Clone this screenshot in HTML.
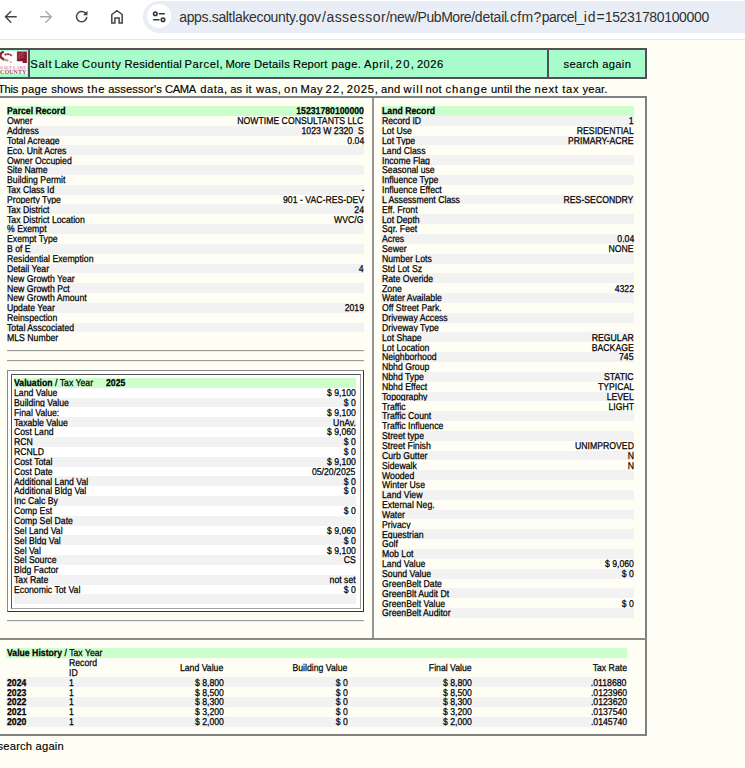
<!DOCTYPE html>
<html><head><meta charset="utf-8"><style>
*{margin:0;padding:0;box-sizing:border-box}
html,body{width:745px;height:768px;overflow:hidden}
body{position:relative;background:#fefef4;font-family:"Liberation Sans",sans-serif;color:#000}
.a{position:absolute}
.r{position:absolute;font-size:9.9px;line-height:9.845px;white-space:nowrap;-webkit-text-stroke:0.25px #000;text-rendering:geometricPrecision}
.r .l{position:absolute;left:0.2px;top:1.3px;transform:scaleX(0.88);transform-origin:0 0}
.r .v{position:absolute;right:0.2px;top:1.3px;transform:scaleX(0.88);transform-origin:100% 0}
.b{font-weight:bold}
.w{position:absolute;font-size:11.2px;letter-spacing:0.3px;line-height:12px;white-space:nowrap;-webkit-text-stroke:0.15px #000}
.u{position:absolute;top:8.6px;font-size:14px;line-height:17px;color:#303030;white-space:pre}
.hr{position:absolute;height:2px;border-top:1px solid #9b9b9b;border-bottom:1px solid #ededed}
</style></head><body>
<div class="a" style="left:0;top:0;width:745px;height:39px;background:#fff"></div>
<div class="a" style="left:0;top:38.8px;width:745px;height:1.5px;background:#e6e6e6"></div>
<div class="a" style="left:143px;top:1px;width:640px;height:31.5px;border-radius:16px;background:#e9eef6"></div>
<div class="a" style="left:147px;top:4.4px;width:23.8px;height:23.8px;border-radius:50%;background:#fff"></div>
<svg class="a" style="left:0;top:0" width="140" height="36" viewBox="0 0 140 36">
 <g fill="none" stroke="#444" stroke-width="1.4" stroke-linecap="round" stroke-linejoin="round">
  <path d="M16.2 16.8H5.6M10.8 11.4L5.4 16.8L10.8 22.2"/>
 </g>
 <g fill="none" stroke="#a7a7a7" stroke-width="1.4" stroke-linecap="round" stroke-linejoin="round">
  <path d="M40.5 16.8H51.1M45.9 11.4L51.3 16.8L45.9 22.2"/>
 </g>
 <g fill="none" stroke="#444" stroke-width="1.5" stroke-linecap="round" stroke-linejoin="round">
  <path d="M86.7 17.5A5.15 5.15 0 1 1 85.2 12.9"/>
 </g>
 <g fill="#444" stroke="none">
  <path d="M87.5 10.8V15.3H83Z"/>
 </g>
 <g fill="none" stroke="#444" stroke-width="1.5" stroke-linejoin="miter">
  <path d="M111.8 23V14.5L117 10.6L122.2 14.5V23H119.1V17.9H114.9V23Z"/>
 </g>
</svg>
<svg class="a" style="left:150px;top:8px" width="18" height="17" viewBox="0 0 18 17">
 <g fill="none" stroke="#333" stroke-width="1.6" stroke-linecap="round">
  <circle cx="5.3" cy="5.7" r="1.75"/><path d="M9.4 5.7H14.3"/>
  <circle cx="13" cy="11.7" r="1.75"/><path d="M3.8 11.7H8.9"/>
 </g>
</svg>
<span class="u" style="left:179.20px;letter-spacing:-0.34px">apps.saltlakecounty</span><span class="u" style="left:295.00px;letter-spacing:-0.117px">.gov</span><span class="u" style="left:322.10px;letter-spacing:0.442px">/assessor</span><span class="u" style="left:386.00px;letter-spacing:-0.345px">/new</span><span class="u" style="left:414.20px;letter-spacing:-0.463px">/PubMore</span><span class="u" style="left:471.20px;letter-spacing:-0.237px">/detail</span><span class="u" style="left:505.80px;letter-spacing:0.293px">.cfm?</span><span class="u" style="left:541.80px;letter-spacing:-0.56px">parcel_</span><span class="u" style="left:583.80px;letter-spacing:0.841px">id=</span><span class="u" style="left:604.70px;letter-spacing:-0.344px">15231780100000</span>

<!-- header table -->
<div class="a" style="left:-10px;top:48.1px;width:656.9px;height:30.6px;background:#554e58;box-shadow:0 0 0 1px #fff"></div>
<div class="a" style="left:0;top:50.1px;width:28.4px;height:26.5px;background:#a7fdca"></div>
<div class="a" style="left:30.1px;top:50.1px;width:517.4px;height:26.5px;background:#a7fdca"></div>
<div class="a" style="left:549.2px;top:50.1px;width:95.6px;height:26.5px;background:#a7fdca"></div>
<svg class="a" style="left:0;top:51.1px" width="27" height="23" viewBox="0 0 27 23">
 <rect width="27" height="23" fill="#fff"/>
 <path d="M3.8 0.6C2 1.2 0.6 2.5 0.3 4C0.4 6 2 7.8 4.2 8.6" stroke="#94243a" stroke-width="2.3" fill="none"/>
 <path d="M4.2 8.6C5.6 9.3 7.2 9.6 8.4 9.2" stroke="#c49a78" stroke-width="2.2" fill="none"/>
 <path d="M4.6 3.8C7 2.6 10.4 3 12 4.8" stroke="#94283c" stroke-width="1.9" stroke-dasharray="2 0.4" fill="none"/>
 <circle cx="10.8" cy="11.2" r="0.9" fill="#d0a888"/>
 <path d="M16.9 0.4H26.9V12.1H22.6V10.2H16.9Z" fill="#8c1830"/>
 <path d="M17.5 3.5L24 1.5M17.5 5.5L24.5 3.2M17.5 7.5L24 5.4" stroke="#c8866a" stroke-width="0.7" stroke-dasharray="1.2 0.5"/>
 <text x="0" y="17.7" font-family="Liberation Serif" font-weight="bold" font-size="5" fill="#cf90a2" textLength="26.5" lengthAdjust="spacingAndGlyphs">SALT LAKE</text>
 <rect x="0" y="18.2" width="26.5" height="0.5" fill="#e8d0b8"/>
 <text x="0" y="22.8" font-family="Liberation Serif" font-weight="bold" font-size="5.8" fill="#a34a5e" textLength="26.5" lengthAdjust="spacingAndGlyphs">COUNTY</text>
</svg>
<span class="w" id="h0" style="left:30.30px;top:57.9px;letter-spacing:0.673px">Salt</span><span class="w" id="h1" style="left:54.60px;top:57.9px;letter-spacing:-0.073px">Lake</span><span class="w" id="h2" style="left:81.90px;top:57.9px;letter-spacing:0.716px">County</span><span class="w" id="h3" style="left:124.60px;top:57.9px;letter-spacing:0.188px">Residential</span><span class="w" id="h4" style="left:184.60px;top:57.9px;letter-spacing:0.540px">Parcel,</span><span class="w" id="h5" style="left:225.60px;top:57.9px;letter-spacing:-0.233px">More</span><span class="w" id="h6" style="left:253.90px;top:57.9px;letter-spacing:0.273px">Details</span><span class="w" id="h7" style="left:292.90px;top:57.9px;letter-spacing:0.172px">Report</span><span class="w" id="h8" style="left:331.50px;top:57.9px;letter-spacing:0.340px">page.</span><span class="w" id="h9" style="left:364.10px;top:57.9px;letter-spacing:0.684px">April,</span><span class="w" id="h10" style="left:395.60px;top:57.9px;letter-spacing:1.340px">20,</span><span class="w" id="h11" style="left:416.90px;top:57.9px;letter-spacing:0.460px">2026</span>
<div class="a" style="left:563.5px;top:57.9px;font-size:11.2px;letter-spacing:0.3px;-webkit-text-stroke:0.15px #000;line-height:12px;white-space:nowrap">search again</div>

<span class="w" id="t0" style="left:-2.00px;top:83px;letter-spacing:-0.300px">This</span><span class="w" id="t1" style="left:21.50px;top:83px;letter-spacing:0.300px">page</span><span class="w" id="t2" style="left:51.20px;top:83px;letter-spacing:0.140px">shows</span><span class="w" id="t3" style="left:87.20px;top:83px;letter-spacing:0.860px">the</span><span class="w" id="t4" style="left:108.20px;top:83px;letter-spacing:0.123px">assessor's</span><span class="w" id="t5" style="left:164.90px;top:83px;letter-spacing:-0.340px">CAMA</span><span class="w" id="t6" style="left:200.20px;top:83px;letter-spacing:0.540px">data,</span><span class="w" id="t7" style="left:230.20px;top:83px;letter-spacing:-0.020px">as</span><span class="w" id="t8" style="left:245.80px;top:83px;letter-spacing:0.300px">it</span><span class="w" id="t9" style="left:256.10px;top:83px;letter-spacing:0.620px">was,</span><span class="w" id="t10" style="left:283.90px;top:83px;letter-spacing:1.100px">on</span><span class="w" id="t11" style="left:300.60px;top:83px;letter-spacing:0.460px">May</span><span class="w" id="t12" style="left:325.60px;top:83px;letter-spacing:1.260px">22,</span><span class="w" id="t13" style="left:346.80px;top:83px;letter-spacing:0.780px">2025,</span><span class="w" id="t14" style="left:380.90px;top:83px;letter-spacing:0.300px">and</span><span class="w" id="t15" style="left:403.40px;top:83px;letter-spacing:1.207px">will</span><span class="w" id="t16" style="left:425.60px;top:83px;letter-spacing:0.220px">not</span><span class="w" id="t17" style="left:445.50px;top:83px;letter-spacing:0.940px">change</span><span class="w" id="t18" style="left:490.90px;top:83px;letter-spacing:0.180px">until</span><span class="w" id="t19" style="left:515.20px;top:83px;letter-spacing:0.140px">the</span><span class="w" id="t20" style="left:534.60px;top:83px;letter-spacing:0.727px">next</span><span class="w" id="t21" style="left:562.20px;top:83px;letter-spacing:0.700px">tax</span><span class="w" id="t22" style="left:582.50px;top:83px;letter-spacing:0.180px">year.</span>

<!-- main table borders -->
<div class="a" style="left:-10px;top:96.4px;width:657px;height:1.7px;background:#828282"></div>
<div class="a" style="left:-10px;top:98.1px;width:654.9px;height:1px;background:#fff;opacity:.7"></div>
<div class="a" style="left:643.9px;top:98.1px;width:1px;height:540px;background:#fff;opacity:.7"></div>
<div class="a" style="left:644.9px;top:96.4px;width:1.8px;height:639.7px;background:#808080"></div>
<div class="a" style="left:372.3px;top:98px;width:1.7px;height:540px;background:#979797"></div>
<div class="a" style="left:-10px;top:637.9px;width:657px;height:1.8px;background:#8a8a8a"></div>
<div class="a" style="left:-10px;top:734.1px;width:657px;height:2px;background:#808080"></div>

<div class="r" style="left:6.7px;top:106.000px;width:357.30px;height:9.845px;background:#ccffcc"><span class="l b">Parcel Record</span><span class="v b">15231780100000</span></div>
<div class="r" style="left:6.7px;top:115.845px;width:357.30px;height:9.845px;background:#fefef4"><span class="l">Owner</span><span class="v">NOWTIME CONSULTANTS LLC</span></div>
<div class="r" style="left:6.7px;top:125.690px;width:357.30px;height:9.845px;background:#f2f2f2"><span class="l">Address</span><span class="v">1023 W 2320&nbsp; S</span></div>
<div class="r" style="left:6.7px;top:135.535px;width:357.30px;height:9.845px;background:#fefef4"><span class="l">Total Acreage</span><span class="v">0.04</span></div>
<div class="r" style="left:6.7px;top:145.380px;width:357.30px;height:9.845px;background:#f2f2f2"><span class="l">Eco. Unit Acres</span><span class="v"></span></div>
<div class="r" style="left:6.7px;top:155.225px;width:357.30px;height:9.845px;background:#fefef4"><span class="l">Owner Occupied</span><span class="v"></span></div>
<div class="r" style="left:6.7px;top:165.070px;width:357.30px;height:9.845px;background:#f2f2f2"><span class="l">Site Name</span><span class="v"></span></div>
<div class="r" style="left:6.7px;top:174.915px;width:357.30px;height:9.845px;background:#fefef4"><span class="l">Building Permit</span><span class="v"></span></div>
<div class="r" style="left:6.7px;top:184.760px;width:357.30px;height:9.845px;background:#f2f2f2"><span class="l">Tax Class Id</span><span class="v">-</span></div>
<div class="r" style="left:6.7px;top:194.605px;width:357.30px;height:9.845px;background:#fefef4"><span class="l">Property Type</span><span class="v">901 - VAC-RES-DEV</span></div>
<div class="r" style="left:6.7px;top:204.450px;width:357.30px;height:9.845px;background:#f2f2f2"><span class="l">Tax District</span><span class="v">24</span></div>
<div class="r" style="left:6.7px;top:214.295px;width:357.30px;height:9.845px;background:#fefef4"><span class="l">Tax District Location</span><span class="v">WVC/G</span></div>
<div class="r" style="left:6.7px;top:224.140px;width:357.30px;height:9.845px;background:#f2f2f2"><span class="l">% Exempt</span><span class="v"></span></div>
<div class="r" style="left:6.7px;top:233.985px;width:357.30px;height:9.845px;background:#fefef4"><span class="l">Exempt Type</span><span class="v"></span></div>
<div class="r" style="left:6.7px;top:243.830px;width:357.30px;height:9.845px;background:#f2f2f2"><span class="l">B of E</span><span class="v"></span></div>
<div class="r" style="left:6.7px;top:253.675px;width:357.30px;height:9.845px;background:#fefef4"><span class="l">Residential Exemption</span><span class="v"></span></div>
<div class="r" style="left:6.7px;top:263.520px;width:357.30px;height:9.845px;background:#f2f2f2"><span class="l">Detail Year</span><span class="v">4</span></div>
<div class="r" style="left:6.7px;top:273.365px;width:357.30px;height:9.845px;background:#fefef4"><span class="l">New Growth Year</span><span class="v"></span></div>
<div class="r" style="left:6.7px;top:283.210px;width:357.30px;height:9.845px;background:#f2f2f2"><span class="l">New Growth Pct</span><span class="v"></span></div>
<div class="r" style="left:6.7px;top:293.055px;width:357.30px;height:9.845px;background:#fefef4"><span class="l">New Growth Amount</span><span class="v"></span></div>
<div class="r" style="left:6.7px;top:302.900px;width:357.30px;height:9.845px;background:#f2f2f2"><span class="l">Update Year</span><span class="v">2019</span></div>
<div class="r" style="left:6.7px;top:312.745px;width:357.30px;height:9.845px;background:#fefef4"><span class="l">Reinspection</span><span class="v"></span></div>
<div class="r" style="left:6.7px;top:322.590px;width:357.30px;height:9.845px;background:#f2f2f2"><span class="l">Total Asscociated</span><span class="v"></span></div>
<div class="r" style="left:6.7px;top:332.435px;width:357.30px;height:9.845px;background:#fefef4"><span class="l">MLS Number</span><span class="v"></span></div>
<div class="hr" style="left:6.8px;top:350.3px;width:356.9px"></div>
<div class="hr" style="left:6.8px;top:359.9px;width:356.9px"></div>

<!-- valuation box -->
<div class="a" style="left:7.1px;top:370.1px;width:357.2px;height:241.7px;background:#fff;border-style:solid;border-width:1.2px;border-color:#8a8a8a #333 #333 #8a8a8a"></div>
<div class="a" style="left:10.9px;top:373.9px;width:349.8px;height:234.7px;border-style:solid;border-width:1.3px;border-color:#555 #a0a0a0 #a0a0a0 #555"></div>
<div class="r" style="left:14.2px;top:377.900px;width:341.90px;height:9.845px;background:#ccffcc"><span class="l"><b>Valuation</b> / Tax Year</span><span class="l b" style="left:91.5px">2025</span></div>
<div class="r" style="left:14.2px;top:387.745px;width:341.90px;height:9.845px;background:#ffffff"><span class="l">Land Value</span><span class="v">$ 9,100</span></div>
<div class="r" style="left:14.2px;top:397.590px;width:341.90px;height:9.845px;background:#f2f2f2"><span class="l">Building Value</span><span class="v">$ 0</span></div>
<div class="r" style="left:14.2px;top:407.435px;width:341.90px;height:9.845px;background:#ffffff"><span class="l">Final Value:</span><span class="v">$ 9,100</span></div>
<div class="r" style="left:14.2px;top:417.280px;width:341.90px;height:9.845px;background:#f2f2f2"><span class="l">Taxable Value</span><span class="v">UnAv.</span></div>
<div class="r" style="left:14.2px;top:427.125px;width:341.90px;height:9.845px;background:#ffffff"><span class="l">Cost Land</span><span class="v">$ 9,060</span></div>
<div class="r" style="left:14.2px;top:436.970px;width:341.90px;height:9.845px;background:#f2f2f2"><span class="l">RCN</span><span class="v">$ 0</span></div>
<div class="r" style="left:14.2px;top:446.815px;width:341.90px;height:9.845px;background:#ffffff"><span class="l">RCNLD</span><span class="v">$ 0</span></div>
<div class="r" style="left:14.2px;top:456.660px;width:341.90px;height:9.845px;background:#f2f2f2"><span class="l">Cost Total</span><span class="v">$ 9,100</span></div>
<div class="r" style="left:14.2px;top:466.505px;width:341.90px;height:9.845px;background:#ffffff"><span class="l">Cost Date</span><span class="v">05/20/2025</span></div>
<div class="r" style="left:14.2px;top:476.350px;width:341.90px;height:9.845px;background:#f2f2f2"><span class="l">Additional Land Val</span><span class="v">$ 0</span></div>
<div class="r" style="left:14.2px;top:486.195px;width:341.90px;height:9.845px;background:#ffffff"><span class="l">Additional Bldg Val</span><span class="v">$ 0</span></div>
<div class="r" style="left:14.2px;top:496.040px;width:341.90px;height:9.845px;background:#f2f2f2"><span class="l">Inc Calc By</span><span class="v"></span></div>
<div class="r" style="left:14.2px;top:505.885px;width:341.90px;height:9.845px;background:#ffffff"><span class="l">Comp Est</span><span class="v">$ 0</span></div>
<div class="r" style="left:14.2px;top:515.730px;width:341.90px;height:9.845px;background:#f2f2f2"><span class="l">Comp Sel Date</span><span class="v"></span></div>
<div class="r" style="left:14.2px;top:525.575px;width:341.90px;height:9.845px;background:#ffffff"><span class="l">Sel Land Val</span><span class="v">$ 9,060</span></div>
<div class="r" style="left:14.2px;top:535.420px;width:341.90px;height:9.845px;background:#f2f2f2"><span class="l">Sel Bldg Val</span><span class="v">$ 0</span></div>
<div class="r" style="left:14.2px;top:545.265px;width:341.90px;height:9.845px;background:#ffffff"><span class="l">Sel Val</span><span class="v">$ 9,100</span></div>
<div class="r" style="left:14.2px;top:555.110px;width:341.90px;height:9.845px;background:#f2f2f2"><span class="l">Sel Source</span><span class="v">CS</span></div>
<div class="r" style="left:14.2px;top:564.955px;width:341.90px;height:9.845px;background:#ffffff"><span class="l">Bldg Factor</span><span class="v"></span></div>
<div class="r" style="left:14.2px;top:574.800px;width:341.90px;height:9.845px;background:#f2f2f2"><span class="l">Tax Rate</span><span class="v">not set</span></div>
<div class="r" style="left:14.2px;top:584.645px;width:341.90px;height:9.845px;background:#ffffff"><span class="l">Economic Tot Val</span><span class="v">$ 0</span></div>
<div class="r" style="left:14.2px;top:594.490px;width:341.90px;height:9.845px;background:#f2f2f2"><span class="l"></span><span class="v"></span></div>
<div class="hr" style="left:6.8px;top:620px;width:356.9px"></div>

<div class="r" style="left:381.4px;top:106.000px;width:252.60px;height:9.845px;background:#ccffcc"><span class="l b">Land Record</span></div>
<div class="r" style="left:381.4px;top:115.845px;width:252.60px;height:9.845px;background:#f2f2f2"><span class="l">Record ID</span><span class="v">1</span></div>
<div class="r" style="left:381.4px;top:125.690px;width:252.60px;height:9.845px;background:#fefef4"><span class="l">Lot Use</span><span class="v">RESIDENTIAL</span></div>
<div class="r" style="left:381.4px;top:135.535px;width:252.60px;height:9.845px;background:#f2f2f2"><span class="l">Lot Type</span><span class="v">PRIMARY-ACRE</span></div>
<div class="r" style="left:381.4px;top:145.380px;width:252.60px;height:9.845px;background:#fefef4"><span class="l">Land Class</span><span class="v"></span></div>
<div class="r" style="left:381.4px;top:155.225px;width:252.60px;height:9.845px;background:#f2f2f2"><span class="l">Income Flag</span><span class="v"></span></div>
<div class="r" style="left:381.4px;top:165.070px;width:252.60px;height:9.845px;background:#fefef4"><span class="l">Seasonal use</span><span class="v"></span></div>
<div class="r" style="left:381.4px;top:174.915px;width:252.60px;height:9.845px;background:#f2f2f2"><span class="l">Influence Type</span><span class="v"></span></div>
<div class="r" style="left:381.4px;top:184.760px;width:252.60px;height:9.845px;background:#fefef4"><span class="l">Influence Effect</span><span class="v"></span></div>
<div class="r" style="left:381.4px;top:194.605px;width:252.60px;height:9.845px;background:#f2f2f2"><span class="l">L Assessment Class</span><span class="v">RES-SECONDRY</span></div>
<div class="r" style="left:381.4px;top:204.450px;width:252.60px;height:9.845px;background:#fefef4"><span class="l">Eff. Front</span><span class="v"></span></div>
<div class="r" style="left:381.4px;top:214.295px;width:252.60px;height:9.845px;background:#f2f2f2"><span class="l">Lot Depth</span><span class="v"></span></div>
<div class="r" style="left:381.4px;top:224.140px;width:252.60px;height:9.845px;background:#fefef4"><span class="l">Sqr. Feet</span><span class="v"></span></div>
<div class="r" style="left:381.4px;top:233.985px;width:252.60px;height:9.845px;background:#f2f2f2"><span class="l">Acres</span><span class="v">0.04</span></div>
<div class="r" style="left:381.4px;top:243.830px;width:252.60px;height:9.845px;background:#fefef4"><span class="l">Sewer</span><span class="v">NONE</span></div>
<div class="r" style="left:381.4px;top:253.675px;width:252.60px;height:9.845px;background:#f2f2f2"><span class="l">Number Lots</span><span class="v"></span></div>
<div class="r" style="left:381.4px;top:263.520px;width:252.60px;height:9.845px;background:#fefef4"><span class="l">Std Lot Sz</span><span class="v"></span></div>
<div class="r" style="left:381.4px;top:273.365px;width:252.60px;height:9.845px;background:#f2f2f2"><span class="l">Rate Overide</span><span class="v"></span></div>
<div class="r" style="left:381.4px;top:283.210px;width:252.60px;height:9.845px;background:#fefef4"><span class="l">Zone</span><span class="v">4322</span></div>
<div class="r" style="left:381.4px;top:293.055px;width:252.60px;height:9.845px;background:#f2f2f2"><span class="l">Water Available</span><span class="v"></span></div>
<div class="r" style="left:381.4px;top:302.900px;width:252.60px;height:9.845px;background:#fefef4"><span class="l">Off Street Park.</span><span class="v"></span></div>
<div class="r" style="left:381.4px;top:312.745px;width:252.60px;height:9.845px;background:#f2f2f2"><span class="l">Driveway Access</span><span class="v"></span></div>
<div class="r" style="left:381.4px;top:322.590px;width:252.60px;height:9.845px;background:#fefef4"><span class="l">Driveway Type</span><span class="v"></span></div>
<div class="r" style="left:381.4px;top:332.435px;width:252.60px;height:9.845px;background:#f2f2f2"><span class="l">Lot Shape</span><span class="v">REGULAR</span></div>
<div class="r" style="left:381.4px;top:342.280px;width:252.60px;height:9.845px;background:#fefef4"><span class="l">Lot Location</span><span class="v">BACKAGE</span></div>
<div class="r" style="left:381.4px;top:352.125px;width:252.60px;height:9.845px;background:#f2f2f2"><span class="l">Neighborhood</span><span class="v">745</span></div>
<div class="r" style="left:381.4px;top:361.970px;width:252.60px;height:9.845px;background:#fefef4"><span class="l">Nbhd Group</span><span class="v"></span></div>
<div class="r" style="left:381.4px;top:371.815px;width:252.60px;height:9.845px;background:#f2f2f2"><span class="l">Nbhd Type</span><span class="v">STATIC</span></div>
<div class="r" style="left:381.4px;top:381.660px;width:252.60px;height:9.845px;background:#fefef4"><span class="l">Nbhd Effect</span><span class="v">TYPICAL</span></div>
<div class="r" style="left:381.4px;top:391.505px;width:252.60px;height:9.845px;background:#f2f2f2"><span class="l">Topography</span><span class="v">LEVEL</span></div>
<div class="r" style="left:381.4px;top:401.350px;width:252.60px;height:9.845px;background:#fefef4"><span class="l">Traffic</span><span class="v">LIGHT</span></div>
<div class="r" style="left:381.4px;top:411.195px;width:252.60px;height:9.845px;background:#f2f2f2"><span class="l">Traffic Count</span><span class="v"></span></div>
<div class="r" style="left:381.4px;top:421.040px;width:252.60px;height:9.845px;background:#fefef4"><span class="l">Traffic Influence</span><span class="v"></span></div>
<div class="r" style="left:381.4px;top:430.885px;width:252.60px;height:9.845px;background:#f2f2f2"><span class="l">Street type</span><span class="v"></span></div>
<div class="r" style="left:381.4px;top:440.730px;width:252.60px;height:9.845px;background:#fefef4"><span class="l">Street Finish</span><span class="v">UNIMPROVED</span></div>
<div class="r" style="left:381.4px;top:450.575px;width:252.60px;height:9.845px;background:#f2f2f2"><span class="l">Curb Gutter</span><span class="v">N</span></div>
<div class="r" style="left:381.4px;top:460.420px;width:252.60px;height:9.845px;background:#fefef4"><span class="l">Sidewalk</span><span class="v">N</span></div>
<div class="r" style="left:381.4px;top:470.265px;width:252.60px;height:9.845px;background:#f2f2f2"><span class="l">Wooded</span><span class="v"></span></div>
<div class="r" style="left:381.4px;top:480.110px;width:252.60px;height:9.845px;background:#fefef4"><span class="l">Winter Use</span><span class="v"></span></div>
<div class="r" style="left:381.4px;top:489.955px;width:252.60px;height:9.845px;background:#f2f2f2"><span class="l">Land View</span><span class="v"></span></div>
<div class="r" style="left:381.4px;top:499.800px;width:252.60px;height:9.845px;background:#fefef4"><span class="l">External Neg.</span><span class="v"></span></div>
<div class="r" style="left:381.4px;top:509.645px;width:252.60px;height:9.845px;background:#f2f2f2"><span class="l">Water</span><span class="v"></span></div>
<div class="r" style="left:381.4px;top:519.490px;width:252.60px;height:9.845px;background:#fefef4"><span class="l">Privacy</span><span class="v"></span></div>
<div class="r" style="left:381.4px;top:529.335px;width:252.60px;height:9.845px;background:#f2f2f2"><span class="l">Equestrian</span><span class="v"></span></div>
<div class="r" style="left:381.4px;top:539.180px;width:252.60px;height:9.845px;background:#fefef4"><span class="l">Golf</span><span class="v"></span></div>
<div class="r" style="left:381.4px;top:549.025px;width:252.60px;height:9.845px;background:#f2f2f2"><span class="l">Mob Lot</span><span class="v"></span></div>
<div class="r" style="left:381.4px;top:558.870px;width:252.60px;height:9.845px;background:#fefef4"><span class="l">Land Value</span><span class="v">$ 9,060</span></div>
<div class="r" style="left:381.4px;top:568.715px;width:252.60px;height:9.845px;background:#f2f2f2"><span class="l">Sound Value</span><span class="v">$ 0</span></div>
<div class="r" style="left:381.4px;top:578.560px;width:252.60px;height:9.845px;background:#fefef4"><span class="l">GreenBelt Date</span><span class="v"></span></div>
<div class="r" style="left:381.4px;top:588.405px;width:252.60px;height:9.845px;background:#f2f2f2"><span class="l">GreenBlt Audit Dt</span><span class="v"></span></div>
<div class="r" style="left:381.4px;top:598.250px;width:252.60px;height:9.845px;background:#fefef4"><span class="l">GreenBelt Value</span><span class="v">$ 0</span></div>
<div class="r" style="left:381.4px;top:608.095px;width:252.60px;height:9.845px;background:#f2f2f2"><span class="l">GreenBelt Auditor</span><span class="v"></span></div>

<!-- value history -->
<div class="r" style="left:6.4px;top:647.9px;width:620.6px;height:9.845px;background:#ccffcc"><span class="l"><b>Value History</b> / Tax Year</span></div>
<div class="r" style="left:6.4px;top:657.7px;width:620.6px;height:19.7px">
 <span class="l" style="left:62.3px;top:1.3px">Record</span><span class="l" style="left:62.3px;top:11.1px">ID</span>
 <span class="v" style="right:403.3px;top:6.2px">Land Value</span>
 <span class="v" style="right:279.5px;top:6.2px">Building Value</span>
 <span class="v" style="right:155.0px;top:6.2px">Final Value</span>
 <span class="v" style="right:0.2px;top:6.2px">Tax Rate</span>
</div>
<div class="r" style="left:6.4px;top:677.400px;width:620.6px;height:9.845px;background:#f2f2f2">
 <span class="l b">2024</span><span class="l" style="left:62.3px">1</span>
 <span class="v" style="right:403.3px">$ 8,800</span><span class="v" style="right:279.5px">$ 0</span>
 <span class="v" style="right:155.0px">$ 8,800</span><span class="v">.0118680</span></div>
<div class="r" style="left:6.4px;top:687.245px;width:620.6px;height:9.845px;background:#fefef4">
 <span class="l b">2023</span><span class="l" style="left:62.3px">1</span>
 <span class="v" style="right:403.3px">$ 8,500</span><span class="v" style="right:279.5px">$ 0</span>
 <span class="v" style="right:155.0px">$ 8,500</span><span class="v">.0123960</span></div>
<div class="r" style="left:6.4px;top:697.090px;width:620.6px;height:9.845px;background:#f2f2f2">
 <span class="l b">2022</span><span class="l" style="left:62.3px">1</span>
 <span class="v" style="right:403.3px">$ 8,300</span><span class="v" style="right:279.5px">$ 0</span>
 <span class="v" style="right:155.0px">$ 8,300</span><span class="v">.0123620</span></div>
<div class="r" style="left:6.4px;top:706.935px;width:620.6px;height:9.845px;background:#fefef4">
 <span class="l b">2021</span><span class="l" style="left:62.3px">1</span>
 <span class="v" style="right:403.3px">$ 3,200</span><span class="v" style="right:279.5px">$ 0</span>
 <span class="v" style="right:155.0px">$ 3,200</span><span class="v">.0137540</span></div>
<div class="r" style="left:6.4px;top:716.780px;width:620.6px;height:9.845px;background:#f2f2f2">
 <span class="l b">2020</span><span class="l" style="left:62.3px">1</span>
 <span class="v" style="right:403.3px">$ 2,000</span><span class="v" style="right:279.5px">$ 0</span>
 <span class="v" style="right:155.0px">$ 2,000</span><span class="v">.0145740</span></div>
<div class="a" style="left:-2.5px;top:740px;font-size:11.2px;letter-spacing:0.2px;-webkit-text-stroke:0.15px #000;line-height:12px;white-space:nowrap">search again</div>
</body></html>
